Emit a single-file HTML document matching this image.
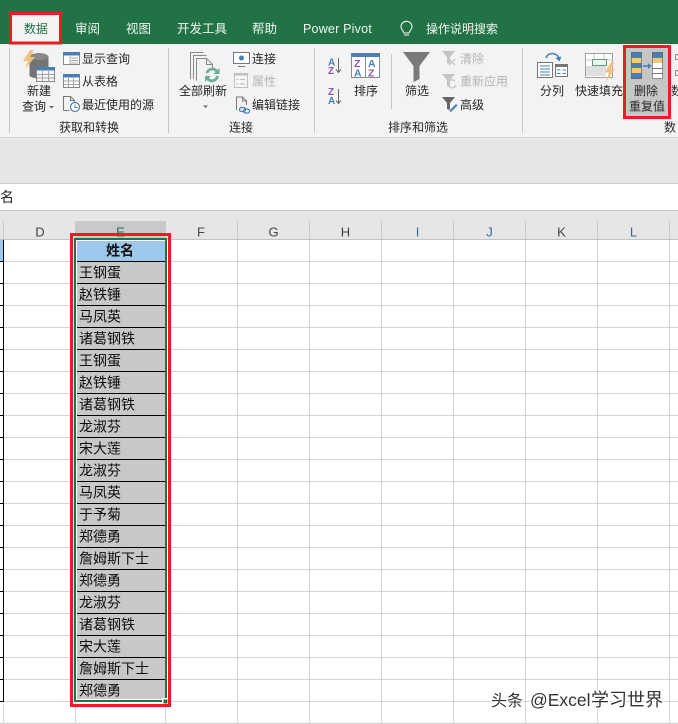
<!DOCTYPE html>
<html><head><meta charset="utf-8"><style>
html,body{margin:0;padding:0;background:#fff;width:678px;height:724px;overflow:hidden}
svg{display:block}
text{font-family:"Liberation Sans","Noto Sans CJK SC",sans-serif;font-size:12px;fill:#262626}
.t{fill:#eef6f1;font-size:12.5px}
.g{fill:#b4b4b4}
.n{font-size:14px;fill:#0d0d0d}
.h{font-size:13px;fill:#444;text-anchor:middle}
.l{fill:#c9c9c9;stroke:none}
.w{font-size:16px;fill:#333;stroke:#fff;stroke-width:2.500px;paint-order:stroke;stroke-linejoin:round}
</style></head><body>
<svg width="678" height="724" viewBox="0 0 678 724" xmlns="http://www.w3.org/2000/svg">
<!-- ribbon -->
<rect width="678" height="44" fill="#217346"/>
<rect y="44" width="678" height="93" fill="#f3f3f3"/>
<rect y="137" width="678" height="46" fill="#e6e6e6"/>
<rect y="137" width="678" height="1" fill="#d2d2d2"/>
<rect x="10" y="13" width="51" height="31" fill="#f3f3f3"/>
<text x="24" y="33" style="fill:#217346;font-size:12px">数据</text>
<text class="t" x="75" y="33">审阅</text>
<text class="t" x="126" y="33">视图</text>
<text class="t" x="177" y="33">开发工具</text>
<text class="t" x="252" y="33">帮助</text>
<text class="t" x="303" y="33" style="font-size:12.5px;letter-spacing:.2px">Power Pivot</text>
<text class="t" x="426" y="33" style="font-size:12px">操作说明搜索</text>
<path d="M404 33c-.6-2.500-3-3.200-3-6.200a5.500 5.500 0 0 1 11 0c0 3-2.400 3.700-3 6.200zM404 35h5" fill="none" stroke="#eef6f1" stroke-width="1.100"/>
<rect x="10.500" y="13.500" width="50" height="29.500" fill="none" stroke="#ed1c24" stroke-width="3"/>

<!-- separators -->
<g fill="#c6c6c6"><rect x="9" y="48" width="1" height="85"/><rect x="168" y="48" width="1" height="85"/><rect x="314" y="48" width="1" height="85"/><rect x="522" y="48" width="1" height="85"/><rect x="391" y="54" width="1" height="55"/></g>

<!-- group 1 icons -->
<ellipse cx="39" cy="57" rx="9.500" ry="4" fill="#8a8a8a"/>
<path d="M29.500 57v19c3 3 16 3 19 0V57c-3 4-16 4-19 0z" fill="#737373"/>
<path d="M30 50l-7 11h5l-3 8 10-12h-5l4-7z" fill="#f0c27a"/>
<rect x="36.500" y="67.500" width="18" height="14" fill="#f5f5f5" stroke="#8a8a8a"/><rect x="36" y="67" width="19" height="3.500" fill="#4a7fb5"/>
<path d="M37 74.500h17M37 78h17M42.500 71v10M48.500 71v10" stroke="#a5a5a5" fill="none"/>
<rect x="63.500" y="52.500" width="16" height="12" fill="#fff" stroke="#8a8a8a"/><rect x="63" y="52" width="17" height="3.500" fill="#4a7fb5"/>
<path d="M71 58h7M71 60.500h7M71 63h7M70 56v8" stroke="#a5a5a5" fill="none"/>
<rect x="63.500" y="74.500" width="16" height="13" fill="#fff" stroke="#8a8a8a"/><rect x="63" y="74" width="17" height="3.500" fill="#4a7fb5"/>
<path d="M64 81h15M64 84.500h15M68.500 78v9M73.500 78v9" stroke="#a5a5a5" fill="none"/>
<path d="M63.500 110.500v-14h7l4 4v4M70.500 96.500v4h4M63.500 110.500h6" fill="none" stroke="#777"/>
<circle cx="75" cy="107" r="4.500" fill="#fff" stroke="#4a7fb5" stroke-width="1.200"/><path d="M75 104.500v3h2.500" fill="none" stroke="#4a7fb5"/>

<text x="27" y="95">新建</text><text x="22" y="110.500">查询</text>
<path d="M49 106h5l-2.500 2.500z" fill="#666"/>
<text x="82" y="63">显示查询</text><text x="82" y="85.500">从表格</text><text x="82" y="109">最近使用的源</text>
<text x="59" y="131.500">获取和转换</text>

<!-- group 2 icons -->
<path d="M190.500 79V52.500h13M193.500 79V55.500h13M196.500 80.500V58.500h10l6 6v4" fill="none" stroke="#8a8a8a"/>
<path d="M206.500 58.500v6h6" fill="none" stroke="#8a8a8a"/>
<path d="M205.500 73a7 7 0 0 1 12-3l2-2v6h-6l2-2a4 4 0 0 0-7 1zM219 76a7 7 0 0 1-12 4l-2 2v-6h6l-2 2a4 4 0 0 0 7-2z" fill="#6fae95"/>
<rect x="233.500" y="52.500" width="16" height="11" fill="#fff" stroke="#777"/><path d="M238 66.500h7" stroke="#777"/><circle cx="241.500" cy="58" r="2.500" fill="#4a7fb5"/>
<rect x="234.500" y="73.500" width="13" height="14" fill="#f6f6f6" stroke="#c0c0c0"/><rect x="234" y="73" width="14" height="2.500" fill="#c0c0c0"/><path d="M240 79.500h5M240 84h5M236.500 79.500h2M236.500 84h2" stroke="#bcbcbc"/>
<path d="M236.500 110v-13h6l4 4v4M242.500 97v4h4" fill="none" stroke="#777"/>
<rect x="239.500" y="107.500" width="6" height="4" rx="2" fill="none" stroke="#4a7fb5" stroke-width="1.300"/><rect x="243.500" y="109" width="6" height="4" rx="2" fill="none" stroke="#4a7fb5" stroke-width="1.300"/>
<text x="179" y="95">全部刷新</text>
<path d="M203 105.500h5l-2.500 2.500z" fill="#666"/>
<text x="252" y="63">连接</text><text class="g" x="252" y="85.500">属性</text><text x="252" y="109">编辑链接</text>
<text x="229" y="131.500">连接</text>

<!-- group 3 icons -->
<text x="328" y="65.500" style="font-size:10px;font-weight:700;fill:#4a7fb5">A</text><text x="328" y="74" style="font-size:10px;font-weight:700;fill:#8e57a8">Z</text>
<path d="M338.500 58v14M336 69.500l2.500 3 2.500-3" fill="none" stroke="#666"/>
<text x="328" y="95" style="font-size:10px;font-weight:700;fill:#8e57a8">Z</text><text x="328" y="104" style="font-size:10px;font-weight:700;fill:#4a7fb5">A</text>
<path d="M338.500 89v14M336 100.500l2.500 3 2.500-3" fill="none" stroke="#666"/>
<rect x="351.500" y="53.500" width="28" height="24" fill="#fff" stroke="#8a8a8a"/><rect x="351" y="53" width="29" height="4" fill="#4a7fb5"/><path d="M365.500 57v20" stroke="#8a8a8a"/>
<text x="354" y="67" style="font-size:10.500px;font-weight:700;fill:#8e57a8">Z</text><text x="354" y="76.500" style="font-size:10.500px;font-weight:700;fill:#4a7fb5">A</text>
<text x="368" y="67" style="font-size:10.500px;font-weight:700;fill:#4a7fb5">A</text><text x="368" y="76.500" style="font-size:10.500px;font-weight:700;fill:#8e57a8">Z</text>
<text x="354" y="95">排序</text>
<path d="M403 52h27l-10.500 14v13l-6 3V66z" fill="#7a7a7a"/>
<text x="405" y="95">筛选</text>
<path d="M442 51h13l-5 6v7l-3-1v-6z" fill="#c4c4c4"/><path d="M449 59l6 6M455 59l-6 6" stroke="#c4c4c4" stroke-width="1.200"/>
<path d="M442 74h13l-5 6v7l-3-1v-6z" fill="#c4c4c4"/><path d="M456 85a4 4 0 1 1-1-4" fill="none" stroke="#c4c4c4" stroke-width="1.300"/>
<path d="M442 97h13l-5 6v7l-3-1v-6z" fill="#666"/><path d="M450 110l6-6 1.500 1.500-6 6-2 .5z" fill="#4a7fb5"/>
<text class="g" x="460" y="63">清除</text><text class="g" x="460" y="85.500">重新应用</text><text x="460" y="109">高级</text>
<text x="388" y="131.500">排序和筛选</text>

<!-- group 4 icons -->
<rect x="537.500" y="62.500" width="15" height="15" fill="#fff" stroke="#777"/>
<path d="M540 66h10M540 69h10M540 72h10M540 75h10" stroke="#4a7fb5"/>
<rect x="555.500" y="64.500" width="12" height="12" fill="#fff" stroke="#777"/><rect x="555" y="64" width="13" height="3" fill="#777"/><path d="M557 70h3.500M562.500 70h3.500M557 73.500h3.500M562.500 73.500h3.500" stroke="#4a7fb5"/>
<path d="M546 58c2-6 10-6 13 0" fill="none" stroke="#4a7fb5" stroke-width="1.600"/><path d="M555.500 58l4 3.500 2-5z" fill="#4a7fb5"/>
<text x="540" y="95">分列</text>
<rect x="585.500" y="53.500" width="27" height="24" fill="#fff" stroke="#a0a0a0"/><path d="M586 60h26M586 72h26M594 54v24M604 54v24" stroke="#c4c4c4"/>
<rect x="592.500" y="59.500" width="14" height="6" fill="#eef5f0" stroke="#5f9f80"/><rect x="586" y="66" width="20" height="10" fill="#dfdfdf"/>
<path d="M611 62l-6 10h4l-3 10 9-13h-4l3-7z" fill="#f0c27a"/>
<text x="575" y="95">快速填充</text>
<rect x="623" y="45" width="48" height="74" fill="#c6c6c6"/>
<rect x="631" y="52" width="11" height="27" fill="#4a7fb5"/><rect x="631" y="58" width="11" height="5" fill="#f0c97c"/><rect x="631" y="68" width="11" height="5" fill="#f0c97c"/>
<rect x="631.500" y="52.500" width="10" height="26" fill="none" stroke="#666" stroke-width=".7"/>
<path d="M643 66h6" stroke="#4a7fb5" stroke-width="1.600"/><path d="M648 63l3.500 3-3.500 3z" fill="#4a7fb5"/>
<rect x="652" y="52" width="11" height="27" fill="#fff"/><rect x="652" y="52" width="11" height="6" fill="#4a7fb5"/><rect x="652" y="58" width="11" height="5" fill="#f0c97c"/><path d="M652 68.500h11M652 73.500h11" stroke="#777"/>
<rect x="652.500" y="52.500" width="10" height="26" fill="none" stroke="#666" stroke-width=".7"/>
<text x="634" y="95">删除</text><text x="629" y="110.500">重复值</text>
<rect x="624.500" y="46.500" width="45" height="71" fill="none" stroke="#ed1c24" stroke-width="3"/>
<path d="M675.500 54.500h3v5h-3zM675.500 70.500h3v5h-3z" fill="none" stroke="#888"/>
<text x="671" y="95">数</text><text x="664" y="131.500">数</text>

<!-- formula bar -->
<rect y="183" width="678" height="28" fill="#fff"/>
<rect y="183" width="678" height="1" fill="#d0d0d0"/><rect y="210" width="678" height="1" fill="#c8c8c8"/>
<text x="0" y="202" style="font-size:14px">名</text>
<!-- column headers -->
<rect y="211" width="678" height="28" fill="#e6e6e6"/>
<rect x="76" y="221" width="90" height="18" fill="#c9c9c9"/>
<rect y="239" width="678" height="1" fill="#c4c4c4"/>
<g class="l">
<rect x="3" y="221" width="1" height="18"/><rect x="75" y="221" width="1" height="18"/><rect x="165" y="221" width="1" height="18"/><rect x="237" y="221" width="1" height="18"/><rect x="309" y="221" width="1" height="18"/><rect x="381" y="221" width="1" height="18"/><rect x="453" y="221" width="1" height="18"/><rect x="525" y="221" width="1" height="18"/><rect x="597" y="221" width="1" height="18"/><rect x="669" y="221" width="1" height="18"/>
</g>
<text class="h" x="40" y="236.500">D</text><text class="h" x="120.500" y="236.500" style="fill:#217346">E</text><text class="h" x="201" y="236.500">F</text><text class="h" x="273.500" y="236.500">G</text><text class="h" x="345.500" y="236.500">H</text><text class="h" x="417.500" y="236.500" style="fill:#356a9a">I</text><text class="h" x="489.500" y="236.500" style="fill:#356a9a">J</text><text class="h" x="561.500" y="236.500">K</text><text class="h" x="633.500" y="236.500" style="fill:#356a9a">L</text>

<!-- grid -->
<g fill="#d4d4d4">
<rect x="3" y="240" width="1" height="484"/><rect x="75" y="240" width="1" height="484"/><rect x="165" y="240" width="1" height="484"/><rect x="237" y="240" width="1" height="484"/><rect x="309" y="240" width="1" height="484"/><rect x="381" y="240" width="1" height="484"/><rect x="453" y="240" width="1" height="484"/><rect x="525" y="240" width="1" height="484"/><rect x="597" y="240" width="1" height="484"/><rect x="669" y="240" width="1" height="484"/>
<rect y="261" width="678" height="1"/><rect y="283" width="678" height="1"/><rect y="305" width="678" height="1"/><rect y="327" width="678" height="1"/><rect y="349" width="678" height="1"/><rect y="371" width="678" height="1"/><rect y="393" width="678" height="1"/><rect y="415" width="678" height="1"/><rect y="437" width="678" height="1"/><rect y="459" width="678" height="1"/><rect y="481" width="678" height="1"/><rect y="503" width="678" height="1"/><rect y="525" width="678" height="1"/><rect y="547" width="678" height="1"/><rect y="569" width="678" height="1"/><rect y="591" width="678" height="1"/><rect y="613" width="678" height="1"/><rect y="635" width="678" height="1"/><rect y="657" width="678" height="1"/><rect y="679" width="678" height="1"/><rect y="701" width="678" height="1"/><rect y="723" width="678" height="1"/>
</g>
<!-- left cut-off column -->
<rect x="0" y="240" width="3" height="21" fill="#9cc8ec"/>
<rect x="3" y="240" width="1" height="462" fill="#000"/>
<path d="M0 261.500h4M0 283.500h4M0 305.500h4M0 327.500h4M0 349.500h4M0 371.500h4M0 393.500h4M0 415.500h4M0 437.500h4M0 459.500h4M0 481.500h4M0 503.500h4M0 525.500h4M0 547.500h4M0 569.500h4M0 591.500h4M0 613.500h4M0 635.500h4M0 657.500h4M0 679.500h4M0 701.500h4" stroke="#000"/>

<!-- E column data -->
<rect x="76" y="240" width="89" height="461" fill="#fff"/>
<rect x="77" y="241" width="88" height="20" fill="#9cc8ec"/>
<rect x="77" y="262" width="88" height="437" fill="#c8c8c8"/>
<path d="M77 261.500h88M77 283.500h88M77 305.500h88M77 327.500h88M77 349.500h88M77 371.500h88M77 393.500h88M77 415.500h88M77 437.500h88M77 459.500h88M77 481.500h88M77 503.500h88M77 525.500h88M77 547.500h88M77 569.500h88M77 591.500h88M77 613.500h88M77 635.500h88M77 657.500h88M77 679.500h88" stroke="#000"/>
<text x="106" y="255.500" style="font-size:14px;font-weight:700;fill:#111">姓名</text>
<text class="n" x="79" y="277.500">王钢蛋</text>
<text class="n" x="79" y="299.500">赵铁锤</text>
<text class="n" x="79" y="321.500">马凤英</text>
<text class="n" x="79" y="343.500">诸葛钢铁</text>
<text class="n" x="79" y="365.500">王钢蛋</text>
<text class="n" x="79" y="387.500">赵铁锤</text>
<text class="n" x="79" y="409.500">诸葛钢铁</text>
<text class="n" x="79" y="431.500">龙淑芬</text>
<text class="n" x="79" y="453.500">宋大莲</text>
<text class="n" x="79" y="475.500">龙淑芬</text>
<text class="n" x="79" y="497.500">马凤英</text>
<text class="n" x="79" y="519.500">于予菊</text>
<text class="n" x="79" y="541.500">郑德勇</text>
<text class="n" x="79" y="563.500">詹姆斯下士</text>
<text class="n" x="79" y="585.500">郑德勇</text>
<text class="n" x="79" y="607.500">龙淑芬</text>
<text class="n" x="79" y="629.500">诸葛钢铁</text>
<text class="n" x="79" y="651.500">宋大莲</text>
<text class="n" x="79" y="673.500">詹姆斯下士</text>
<text class="n" x="79" y="695.500">郑德勇</text>
<!-- selection -->
<rect x="75" y="239" width="91" height="462" fill="none" stroke="#217346" stroke-width="2"/>
<rect x="162" y="698" width="6" height="6" fill="#fff"/><rect x="163.500" y="699.500" width="4" height="4" fill="#217346"/>
<!-- red frame -->
<rect x="71.500" y="234.500" width="98" height="471" fill="none" stroke="#ed1c24" stroke-width="3"/>
<!-- watermark -->
<text class="w" x="491" y="706">头条</text>
<text class="w" x="530" y="706" style="font-size:17.5px">@Excel</text>
<text class="w" x="591" y="706" style="font-size:18px">学习世界</text>
</svg>
</body></html>
